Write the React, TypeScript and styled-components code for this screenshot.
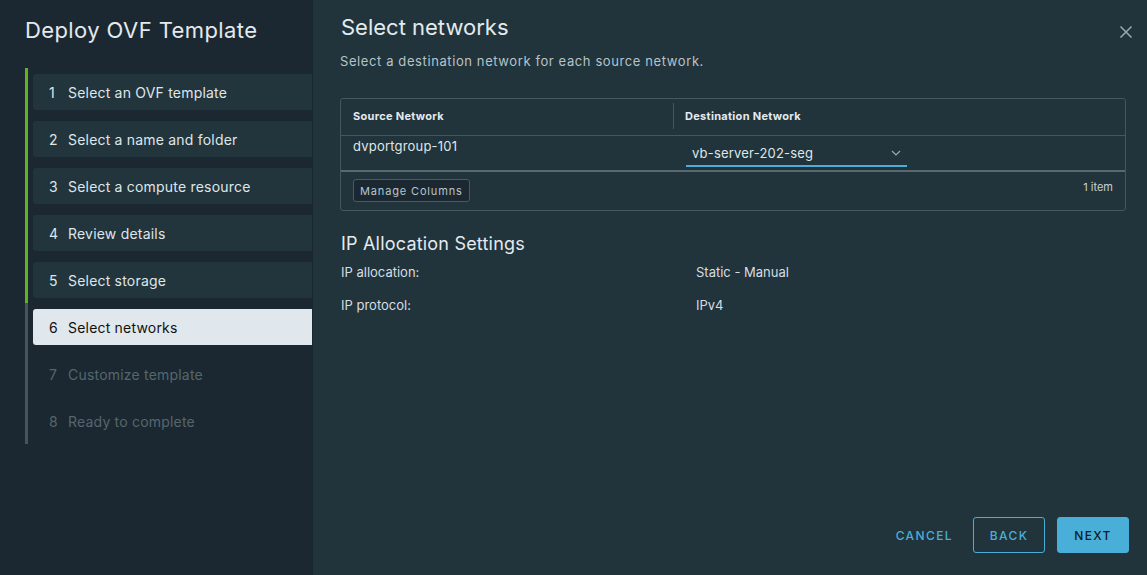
import { createGlobalStyle } from 'styled-components'
import styled from 'styled-components'

const GlobalStyle = createGlobalStyle`
  html, body {
    margin: 0;
    padding: 0;
    background: #21333b;
  }
  body {
    font-family: Inter, "Open Sans", "Liberation Sans", sans-serif;
    -webkit-font-smoothing: antialiased;
  }
`

const Modal = styled.div`
  display: flex;
  width: 1147px;
  height: 575px;
  overflow: hidden;
`

const Sidebar = styled.div`
  width: 313px;
  flex-shrink: 0;
  background: #1b2831;
  padding-left: 25px;
  box-sizing: border-box;
  border-right: 1px solid #1a262d;
`

const SideTitle = styled.h2`
  margin: 16px 0 24px 0;
  font-size: 22px;
  line-height: 28px;
  font-weight: 400;
  color: #e4eaee;
  letter-spacing: 0.4px;
`

const StepList = styled.div`
  display: flex;
  flex-direction: column;
`

const StepWrap = styled.div<{ $done: boolean }>`
  border-left: 3px solid ${(p) => (p.$done ? '#62b21e' : '#46555b')};
  padding: 6px 0 5px 5px;
`

const StepItem = styled.div<{ $state: 'done' | 'active' | 'todo' }>`
  height: 36px;
  display: flex;
  align-items: center;
  padding-left: 16px;
  border-radius: 3px 0 0 3px;
  font-size: 14px;
  letter-spacing: 0.2px;
  background: ${(p) =>
    p.$state === 'active' ? '#e1e8ed' : p.$state === 'done' ? '#22343c' : 'transparent'};
  color: ${(p) =>
    p.$state === 'active' ? '#111' : p.$state === 'done' ? '#dfe6ea' : '#56666d'};
`

const StepNum = styled.span`
  width: 19px;
`

const Main = styled.div`
  flex: 1;
  display: flex;
  flex-direction: column;
  padding: 13px 21px 22px 27px;
  position: relative;
  color: #d6dee3;
`

const Close = styled.button`
  position: absolute;
  top: 25px;
  right: 14px;
  background: none;
  border: none;
  padding: 0;
  cursor: pointer;
  color: #9aaab3;
  display: flex;
`

const Title = styled.h1`
  margin: 0 0 0 1px;
  font-size: 22px;
  line-height: 28px;
  font-weight: 400;
  color: #e4eaee;
`

const Subtitle = styled.p`
  margin: 10px 0 0 0;
  font-size: 13px;
  line-height: 20px;
  color: #b6c3ca;
  letter-spacing: 0.6px;
`

const Table = styled.div`
  margin-top: 27px;
  border: 1px solid #46565f;
  border-radius: 3px;
`

const Grid = styled.div`
  display: grid;
  grid-template-columns: 332px 1fr;
`

const HeadCell = styled.div`
  height: 36px;
  display: flex;
  align-items: center;
  padding: 0 0 2px 12px;
  box-sizing: border-box;
  font-size: 11px;
  font-weight: 700;
  letter-spacing: 0.3px;
  color: #e4eaee;
`

const HeadDivider = styled.div`
  border-left: 1px solid #46565f;
  height: 26px;
  margin-right: 11px;
  margin-left: -12px;
`

const Cell = styled.div`
  height: 35px;
  border-top: 1px solid #46565f;
  padding: 2px 0 0 12px;
  box-sizing: border-box;
  font-size: 13px;
  letter-spacing: 0.2px;
  color: #dfe6ea;
`

const SelectBox = styled.div`
  width: 221px;
  height: 27px;
  margin-top: 2px;
  margin-left: 1px;
  box-sizing: border-box;
  display: flex;
  align-items: center;
  justify-content: space-between;
  padding: 0 6px 0 6px;
  border-bottom: 2px solid #49afd9;
  font-size: 13px;
  color: #dfe6ea;
`

const Footer = styled.div`
  border-top: 2px solid #5a6970;
  height: 38px;
  display: flex;
  align-items: center;
  justify-content: space-between;
  padding: 0 12px;
`

const SmallButton = styled.button`
  height: 23px;
  padding: 0 6px;
  background: #1b2831;
  border: 1px solid #4b5a62;
  border-radius: 3px;
  color: #b8c5cc;
  font-family: inherit;
  font-size: 11px;
  letter-spacing: 0.85px;
  margin-top: -1px;
`

const ItemCount = styled.span`
  font-size: 11px;
  color: #c8d2d8;
  margin-top: -8px;
`

const SectionTitle = styled.h3`
  margin: 22px 0 0 1px;
  font-size: 18px;
  line-height: 22px;
  font-weight: 400;
  color: #e4eaee;
  letter-spacing: 0.2px;
`

const InfoGrid = styled.div`
  display: grid;
  grid-template-columns: 355px 1fr;
  row-gap: 17px;
  margin-top: 9px;
  margin-left: 1px;
  font-size: 13px;
  line-height: 16px;
  color: #d6dee3;
`

const Actions = styled.div`
  margin-top: auto;
  display: flex;
  justify-content: flex-end;
  align-items: center;
  gap: 12px;
  margin-right: -3px;
`

const ActionButton = styled.button<{ $variant: 'link' | 'outline' | 'solid' }>`
  height: 36px;
  min-width: 72px;
  padding: 0 ${(p) => (p.$variant === 'link' ? '7px' : '12px')};
  border-radius: 3px;
  font-family: inherit;
  font-size: 12px;
  font-weight: 500;
  letter-spacing: 1.4px;
  cursor: pointer;
  border: 1px solid ${(p) => (p.$variant === 'link' ? 'transparent' : '#49afd9')};
  background: ${(p) => (p.$variant === 'solid' ? '#49afd9' : 'transparent')};
  color: ${(p) => (p.$variant === 'solid' ? '#0f1c22' : '#49afd9')};
`

const steps = [
  'Select an OVF template',
  'Select a name and folder',
  'Select a compute resource',
  'Review details',
  'Select storage',
  'Select networks',
  'Customize template',
  'Ready to complete',
]
const current = 5

export default function App() {
  return (
    <>
      <GlobalStyle />
      <Modal>
        <Sidebar>
          <SideTitle>Deploy OVF Template</SideTitle>
          <StepList>
            {steps.map((s, i) => (
              <StepWrap key={s} $done={i < current}>
                <StepItem $state={i < current ? 'done' : i === current ? 'active' : 'todo'}>
                  <StepNum>{i + 1}</StepNum>
                  {s}
                </StepItem>
              </StepWrap>
            ))}
          </StepList>
        </Sidebar>
        <Main>
          <Close aria-label="Close">
            <svg width="14" height="14" viewBox="0 0 14 14">
              <path d="M1.5 1.5 L12.5 12.5 M12.5 1.5 L1.5 12.5" stroke="currentColor" strokeWidth="1.5" />
            </svg>
          </Close>
          <Title>Select networks</Title>
          <Subtitle>Select a destination network for each source network.</Subtitle>
          <Table>
            <Grid>
              <HeadCell>Source Network</HeadCell>
              <HeadCell>
                <HeadDivider />
                Destination Network
              </HeadCell>
              <Cell>dvportgroup-101</Cell>
              <Cell>
                <SelectBox>
                  vb-server-202-seg
                  <svg width="10" height="6" viewBox="0 0 10 6">
                    <path d="M1 1 L5 5 L9 1" fill="none" stroke="#9aaab3" strokeWidth="1.2" />
                  </svg>
                </SelectBox>
              </Cell>
            </Grid>
            <Footer>
              <SmallButton>Manage Columns</SmallButton>
              <ItemCount>1 item</ItemCount>
            </Footer>
          </Table>
          <SectionTitle>IP Allocation Settings</SectionTitle>
          <InfoGrid>
            <span>IP allocation:</span>
            <span>Static - Manual</span>
            <span>IP protocol:</span>
            <span>IPv4</span>
          </InfoGrid>
          <Actions>
            <ActionButton $variant="link">CANCEL</ActionButton>
            <ActionButton $variant="outline">BACK</ActionButton>
            <ActionButton $variant="solid">NEXT</ActionButton>
          </Actions>
        </Main>
      </Modal>
    </>
  )
}
